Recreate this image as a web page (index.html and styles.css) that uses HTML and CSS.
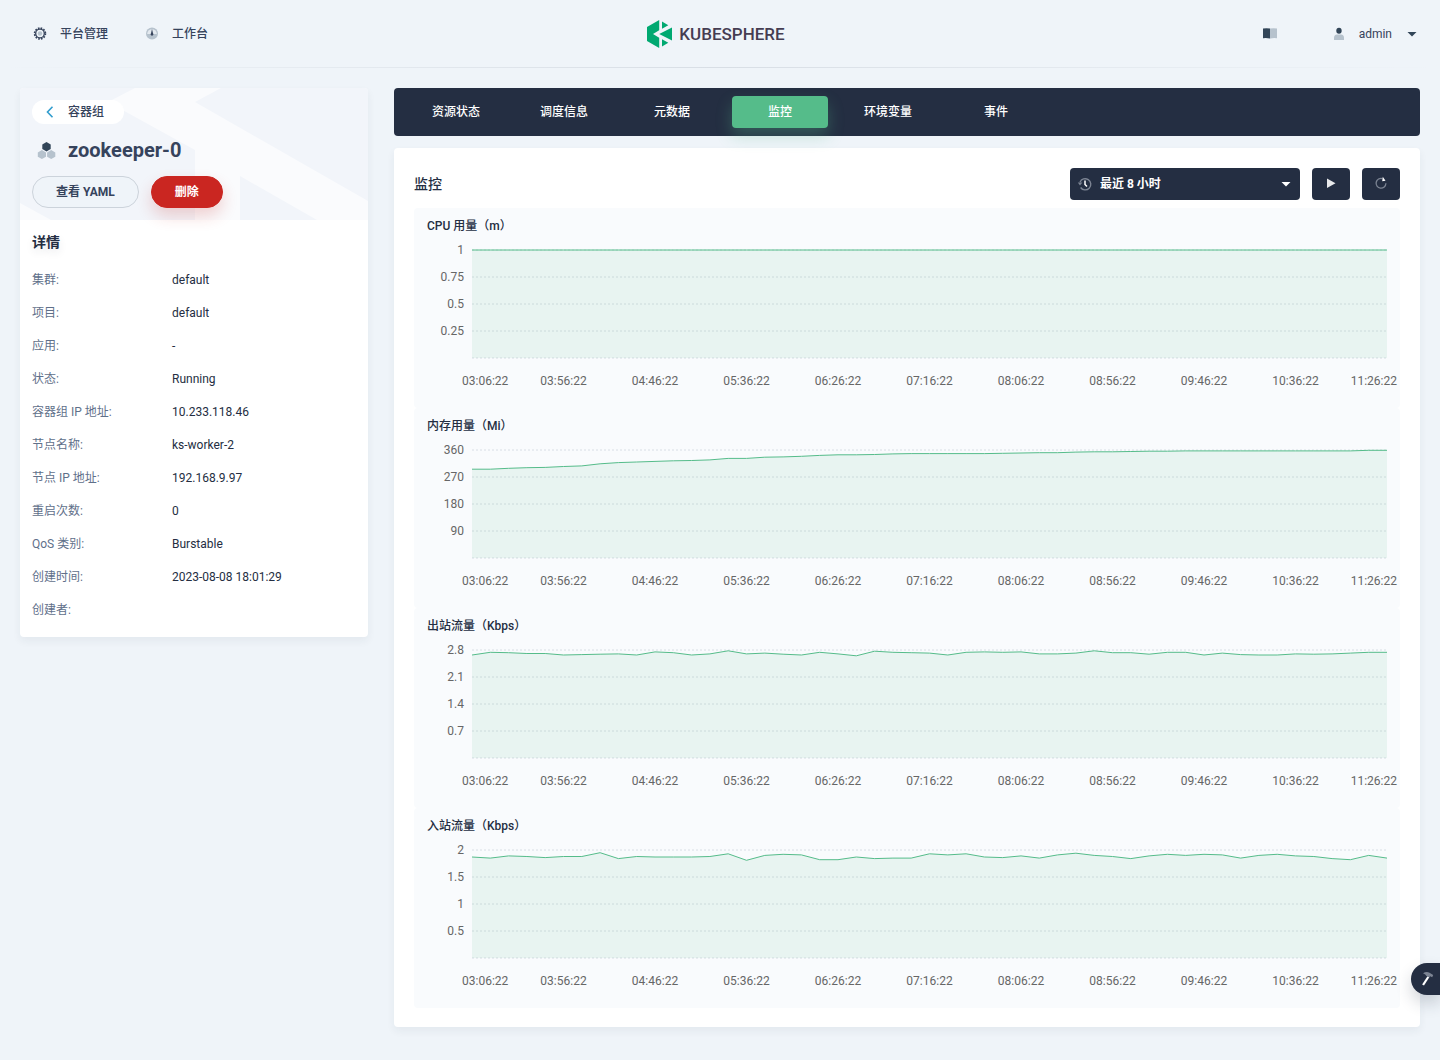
FILE: index.html
```
<!DOCTYPE html>
<html lang="zh-CN">
<head>
    <meta charset="UTF-8">
    <meta name="viewport" content="width=device-width, initial-scale=1.0">
    <title>zookeeper-0 - KubeSphere</title>
    <link rel="stylesheet" href="styles.css">
</head>
<body>

    <header class="header">
        <nav class="nav">
            <a href="#" class="nav-item">
                <svg width="16" height="16" viewBox="0 0 16 16">
                    <circle cx="8" cy="7.500" r="5.400" fill="none" stroke="#36435c" stroke-width="1.700" stroke-dasharray="1.600 1.230"/>
                    <circle cx="8" cy="7.500" r="4.300" fill="none" stroke="#36435c" stroke-width="1.300"/>
                    <circle cx="8" cy="7.500" r="2.200" fill="#b6c2cd"/>
                </svg>
                平台管理
            </a>
            <a href="#" class="nav-item">
                <svg width="16" height="16" viewBox="0 0 16 16">
                    <circle cx="8" cy="7.500" r="6" fill="#b6c2cd"/>
                    <path d="M3.200 8a4.800 4.800 0 0 1 9.600 0z" fill="#e3e9ef"/>
                    <path d="M8 3l1 4.200a1.400 1.400 0 1 1-2 0z" fill="#36435c"/>
                </svg>
                工作台
            </a>
        </nav>

        <a href="#" class="logo">
            <svg width="26" height="28" viewBox="0 0 26 28">
                <path d="M12.200 0v10.200L6 14l6.200 3.800V28L0 21V7z" fill="#00a971"/>
                <path d="M15 1.600l6.300 3.700L15 8.800zM25 7.400v13.200L12.200 14zM15 19.200l6.300 3.500-6.300 3.700z" fill="#00a971"/>
            </svg>
            <span>KUBESPHERE</span>
        </a>

        <div class="header-right">
            <button class="icon-btn" aria-label="文档">
                <svg width="16" height="16" viewBox="0 0 16 16">
                    <path d="M1 2.500q3.500-.6 7 0v10q-3.500-.8-7-.3z" fill="#324558"/>
                    <path d="M8 2.500q3.500-.6 7 0v9.700q-3.500-.5-7 .3z" fill="#b6c2cd"/>
                </svg>
            </button>
            <button class="user">
                <svg width="16" height="16" viewBox="0 0 16 16">
                    <ellipse cx="8" cy="4.700" rx="2.700" ry="3" fill="#324558"/>
                    <path d="M3 14v-2q0-3 3-3.400h4q3 .4 3 3.400v2z" fill="#b6c2cd"/>
                </svg>
                <span>admin</span>
                <svg width="16" height="16" viewBox="0 0 16 16"><path d="M3.500 6h9L8 10.600z" fill="#324558"/></svg>
            </button>
        </div>
    </header>

    <div class="page">
        <aside class="side card">
            <div class="side-top">
                <a href="#" class="back">
                    <svg width="12" height="12" viewBox="0 0 12 12"><path d="M8.500 .8L3.500 6l5 5.200" fill="none" stroke="#329dce" stroke-width="1.600"/></svg>
                    容器组
                </a>
                <h1 class="pod-name">
                    <svg width="20" height="20" viewBox="0 0 20 20">
                        <path d="M10.500 2l4.200 2.400v4.700l-4.200 2.400-4.200-2.400V4.400z" fill="#324558"/>
                        <path d="M5.900 10l4.100 2.400v4.300l-4.100 2.400-4.100-2.400v-4.300zM15.200 10l4.100 2.400v4.300l-4.100 2.400-4.100-2.400v-4.300z" fill="#b6c2cd"/>
                    </svg>
                    zookeeper-0
                </h1>
                <div class="actions">
                    <button class="btn">查看 YAML</button>
                    <button class="btn btn-danger">删除</button>
                </div>
            </div>
            <div class="side-body">
                <h2>详情</h2>
                <dl class="detail">
                    <dt>集群:</dt><dd>default</dd>
                    <dt>项目:</dt><dd>default</dd>
                    <dt>应用:</dt><dd>-</dd>
                    <dt>状态:</dt><dd>Running</dd>
                    <dt>容器组 IP 地址:</dt><dd>10.233.118.46</dd>
                    <dt>节点名称:</dt><dd>ks-worker-2</dd>
                    <dt>节点 IP 地址:</dt><dd>192.168.9.97</dd>
                    <dt>重启次数:</dt><dd>0</dd>
                    <dt>QoS 类别:</dt><dd>Burstable</dd>
                    <dt>创建时间:</dt><dd>2023-08-08 18:01:29</dd>
                    <dt>创建者:</dt><dd></dd>
                </dl>
            </div>
        </aside>

        <main class="main">
            <nav class="tabs">
                <a href="#">资源状态</a>
                <a href="#">调度信息</a>
                <a href="#">元数据</a>
                <a href="#" class="active">监控</a>
                <a href="#">环境变量</a>
                <a href="#">事件</a>
            </nav>

            <section class="card monitor">
                <div class="toolbar">
                    <h2>监控</h2>
                    <div class="range">
                        <svg class="range-clock" width="16" height="16" viewBox="0 0 16 16">
                            <path d="M3 6.200A5.600 5.600 0 1 1 3.600 11.500" fill="none" stroke="#7c8493" stroke-width="1.400"/>
                            <path d="M.8 6.500h4.600L3 9.500z" fill="#7c8493"/>
                            <path d="M8 4.500v4l2 2" fill="none" stroke="#fff" stroke-width="1.500"/>
                        </svg>
                        <select aria-label="时间范围">
                            <option>最近 8 小时</option>
                            <option>最近 12 小时</option>
                            <option>最近 1 天</option>
                        </select>
                        <svg class="range-caret" width="16" height="16" viewBox="0 0 16 16"><path d="M3.500 6h9L8 10.600z" fill="#fff"/></svg>
                    </div>
                    <button class="tool-btn" aria-label="开始">
                        <svg width="16" height="16" viewBox="0 0 16 16"><path d="M4 2.500l8.500 4.700L4 12z" fill="#e9eaec"/></svg>
                    </button>
                    <button class="tool-btn" aria-label="刷新">
                        <svg width="16" height="16" viewBox="0 0 16 16">
                            <path d="M9.500 2.600A4.900 4.900 0 1 0 12.900 7.300" fill="none" stroke="#7c8493" stroke-width="1.300"/>
                            <path d="M9.800 .8l2.700 3.900-3.300.5z" fill="#fff"/>
                        </svg>
                    </button>
                </div>
                <div id="charts"></div>
            </section>
        </main>
    </div>

    <button class="toolbox" aria-label="工具箱">
        <svg width="16" height="16" viewBox="0 0 16 16">
            <path d="M8.500 5.300l1.800.9L5 14.500l-1.900-1z" fill="#fff"/>
            <path d="M4 2.300q3.500-2.300 6.500-.5l3.700 2.200-1 2.200-2-1-1 1.200-3-1.600q-.2-1.500-3.200-2.500z" fill="#7c8493"/>
        </svg>
    </button>

    <script>
        const times = ["03:06:22", "03:56:22", "04:46:22", "05:36:22", "06:26:22", "07:16:22",
            "08:06:22", "08:56:22", "09:46:22", "10:36:22", "11:26:22"];

        const charts = [
            { title: "CPU 用量（m）", ticks: [1, 0.75, 0.5, 0.25], data: new Array(51).fill(1) },
            { title: "内存用量（Mi）", ticks: [360, 270, 180, 90], data: [
                296, 296, 299, 301, 302, 305, 307, 314, 318, 320, 322, 324, 325, 327, 332, 332, 336,
                337, 339, 342, 344, 344, 345, 347, 348, 348, 348, 348, 348, 349, 350, 351, 351, 353,
                354, 354, 355, 356, 356, 357, 357, 357, 357, 357, 357, 357, 357, 357, 357, 359, 359] },
            { title: "出站流量（Kbps）", ticks: [2.8, 2.1, 1.4, 0.7], data: [
                2.67, 2.74, 2.73, 2.71, 2.71, 2.67, 2.68, 2.69, 2.70, 2.67, 2.75, 2.73, 2.67, 2.70, 2.78, 2.70, 2.72,
                2.69, 2.67, 2.74, 2.70, 2.65, 2.77, 2.74, 2.73, 2.72, 2.67, 2.74, 2.75, 2.74, 2.75, 2.70, 2.70, 2.72,
                2.78, 2.73, 2.73, 2.69, 2.74, 2.74, 2.67, 2.72, 2.68, 2.67, 2.67, 2.70, 2.69, 2.70, 2.72, 2.74, 2.74] },
            { title: "入站流量（Kbps）", ticks: [2, 1.5, 1, 0.5], data: [
                1.87, 1.85, 1.89, 1.88, 1.86, 1.88, 1.88, 1.95, 1.84, 1.88, 1.87, 1.87, 1.87, 1.88, 1.93, 1.81, 1.90,
                1.92, 1.91, 1.82, 1.82, 1.87, 1.84, 1.85, 1.85, 1.93, 1.91, 1.93, 1.87, 1.86, 1.89, 1.85, 1.91, 1.94,
                1.90, 1.88, 1.84, 1.89, 1.92, 1.90, 1.92, 1.91, 1.85, 1.90, 1.92, 1.89, 1.88, 1.84, 1.82, 1.90, 1.85] }
        ];

        // plot area inside the svg
        const left = 58, right = 13, top0 = 14, plotHeight = 108;

        function drawChart(chart, width) {
            const plotWidth = width - left - right;
            const bottom = top0 + plotHeight;
            let svg = "";

            for (let i = 0; i <= 4; i++) {
                const y = top0 + i * plotHeight / 4;
                svg += `<line class="grid" x1="${left}" y1="${y}" x2="${left + plotWidth}" y2="${y}"/>`;
                if (i < 4) {
                    svg += `<text x="${left - 8}" y="${y + 4}" text-anchor="end">${chart.ticks[i]}</text>`;
                }
            }

            const points = chart.data.map((value, i) => {
                const x = left + i * plotWidth / (chart.data.length - 1);
                const y = bottom - value / chart.ticks[0] * plotHeight;
                return x.toFixed(1) + "," + y.toFixed(1);
            }).join(" ");
            svg += `<polygon class="area" points="${left},${bottom} ${points} ${left + plotWidth},${bottom}"/>`;
            svg += `<polyline class="line" points="${points}"/>`;

            // the first and last labels are kept inside the panel
            times.forEach((time, i) => {
                let x = left + i * plotWidth / (times.length - 1);
                let anchor = "middle";
                if (i === 0) { x = left - 10; anchor = "start"; }
                if (i === times.length - 1) { x = width - 3; anchor = "end"; }
                svg += `<text x="${x}" y="${bottom + 27}" text-anchor="${anchor}">${time}</text>`;
            });

            return `<div class="chart"><h3>${chart.title}</h3><svg width="${width}" height="160">${svg}</svg></div>`;
        }

        function render() {
            const box = document.getElementById("charts");
            const width = box.clientWidth;
            box.innerHTML = charts.map(chart => drawChart(chart, width)).join("");
        }

        render();
        window.addEventListener("resize", render);
    </script>

</body>
</html>
```
FILE: styles.css
```
* {
    box-sizing: border-box;
}
body {
    margin: 0;
    background-color: #eff4f9;
    color: #242e42;
    font-family: Roboto, "Noto Sans CJK SC", sans-serif;
    font-size: 12px;
    line-height: 20px;
}
h1, h2, h3, dl, dd {
    margin: 0;
}
a {
    color: inherit;
    text-decoration: none;
}
button {
    font: inherit;
    color: inherit;
    border: none;
    background: none;
    padding: 0;
    cursor: pointer;
}
svg {
    display: block;
    flex: none;
}

/* header */
.header {
    display: grid;
    grid-template-columns: 1fr auto 1fr;
    align-items: center;
    height: 68px;
    padding: 0 20px 0 12px;
    background: linear-gradient(to right, #eff4f9, #d8dee5 50%, #eff4f9) bottom / 100% 1px no-repeat;
}
.nav {
    display: flex;
    gap: 36px;
    padding-left: 20px;
}
.nav-item {
    display: flex;
    align-items: center;
    gap: 12px;
    color: #36435c;
    font-weight: 500;
}
.logo {
    display: flex;
    align-items: center;
    gap: 6px;
    color: #453d52;
    font-family: "Liberation Sans Narrow", Roboto, sans-serif;
    font-size: 17px;
    font-weight: 500;
}
.header-right {
    display: flex;
    align-items: center;
    justify-content: flex-end;
    gap: 53px;
}
.user {
    display: flex;
    align-items: center;
    gap: 12px;
    color: #36435c;
}

/* layout */
.page {
    display: grid;
    grid-template-columns: 348px minmax(0, 1fr);
    align-items: start;
    gap: 26px;
    padding: 20px 20px 32px;
}
.card {
    background-color: #fff;
    border-radius: 4px;
    box-shadow: 0 4px 8px 0 rgba(36, 46, 66, 0.06);
}

/* sidebar */
.side-top {
    padding: 12px;
    border-radius: 4px 4px 0 0;
    background: #f2f5fa url("data:image/svg+xml,%3Csvg xmlns='http://www.w3.org/2000/svg' width='348' height='132'%3E%3Cpath fill='%23fafbfd' d='M115 0h86l-26 14 173 99v19h-51l-77-44v44h-45V62L88 14zM0 115l31 17H0z'/%3E%3C/svg%3E") no-repeat;
}
.back {
    display: inline-flex;
    align-items: center;
    gap: 12px;
    height: 24px;
    padding: 0 20px 0 12px;
    border-radius: 12px;
    background-color: #fff;
    color: #36435c;
    font-weight: 500;
    vertical-align: top;
}
.pod-name {
    display: flex;
    align-items: center;
    gap: 12px;
    margin: 12px 0;
    padding-left: 4px;
    color: #36435c;
    font-size: 20px;
    line-height: 28px;
}
.actions {
    display: flex;
    gap: 12px;
}
.btn {
    height: 32px;
    padding: 0 23px;
    border: 1px solid #ccd3db;
    border-radius: 16px;
    background-color: #eff4f9;
    color: #36435c;
    font-weight: 700;
}
.btn-danger {
    border-color: #ca2621;
    background-color: #ca2621;
    color: #fff;
    box-shadow: 0 8px 16px 0 rgba(202, 38, 33, 0.2);
}
.side-body {
    padding: 12px 12px 17px;
}
.side-body h2 {
    margin-bottom: 18px;
    font-size: 14px;
    text-shadow: 0 4px 8px rgba(36, 46, 66, 0.1);
}
.detail {
    display: grid;
    grid-template-columns: 140px 1fr;
    row-gap: 13px;
}
.detail dt {
    color: #5f708a;
}

/* tabs */
.tabs {
    display: flex;
    gap: 12px;
    margin-bottom: 12px;
    padding: 8px 14px;
    border-radius: 4px;
    background-color: #242e42;
    color: #fff;
    font-weight: 500;
}
.tabs a {
    width: 96px;
    border-radius: 4px;
    line-height: 32px;
    text-align: center;
}
.tabs .active {
    background-color: #55bc8a;
    box-shadow: 0 8px 16px 0 rgba(85, 188, 138, 0.3);
}

/* monitoring */
.monitor {
    padding: 20px 20px 19px;
}
.toolbar {
    display: flex;
    align-items: center;
    gap: 12px;
    margin-bottom: 8px;
}
.toolbar h2 {
    flex: 1;
    font-size: 14px;
    font-weight: 500;
}
.range {
    position: relative;
}
.range select {
    display: block;
    width: 230px;
    height: 32px;
    padding: 0 30px;
    appearance: none;
    border: none;
    border-radius: 4px;
    background-color: #242e42;
    color: #fff;
    font: inherit;
    font-weight: 700;
}
.range-clock, .range-caret {
    position: absolute;
    top: 8px;
    pointer-events: none;
}
.range-clock {
    left: 7px;
}
.range-caret {
    right: 6px;
}
.tool-btn {
    display: flex;
    align-items: center;
    justify-content: center;
    width: 38px;
    height: 32px;
    border-radius: 4px;
    background-color: #242e42;
}
.chart {
    padding: 8px 0 12px;
    border-radius: 4px;
    background-color: #f9fbfd;
}
.chart h3 {
    padding: 0 13px;
    font-size: 12px;
    font-weight: 500;
}
.chart text {
    fill: #666;
}
.grid {
    stroke: #d8dee5;
    stroke-dasharray: 2 2;
}
.area {
    fill: #55bc8a;
    fill-opacity: 0.1;
}
.line {
    fill: none;
    stroke: #55bc8a;
}

.toolbox {
    position: fixed;
    right: 0;
    bottom: 65px;
    width: 29px;
    height: 32px;
    padding-left: 8px;
    border-radius: 16px 0 0 16px;
    background-color: #242e42;
    box-shadow: 0 8px 16px 0 rgba(36, 46, 66, 0.2);
}
```
